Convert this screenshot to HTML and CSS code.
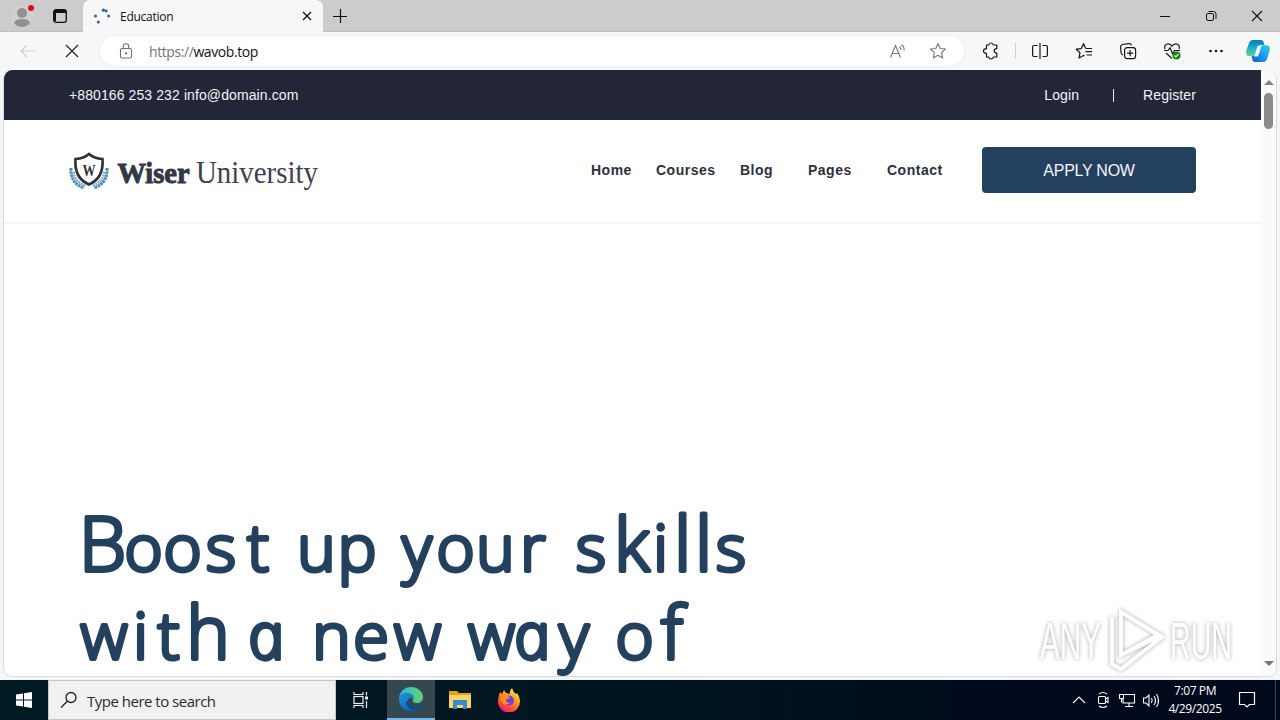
FILE: index.html
```html
<!DOCTYPE html>
<html lang="en">
<head>
<meta charset="utf-8">
<title>Education</title>
<link rel="stylesheet" href="styles.css">
</head>
<body>
<div class="desktop">
  <header class="titlebar">
    <svg class="avatar" width="28" height="32" viewBox="0 0 28 32"><circle cx="14" cy="17" r="11" fill="#d2cfce"/><circle cx="14" cy="13" r="5" fill="#929090"/><path d="M6 23q1-4 8-4t8 4q-3 4-8 4t-8-4z" fill="#929090"/><circle cx="23" cy="8" r="3" fill="#e00b1c"/></svg>
    <svg class="spaces" width="16" height="16" viewBox="0 0 16 16"><rect x="1.700" y="1.700" width="12.600" height="12.600" rx="2.300" fill="none" stroke="#111" stroke-width="1.300"/><path d="M2 2h12v3H2zM2 5h2v8H2z" fill="#111"/></svg>
    <div class="tab">
      <svg width="18" height="18" viewBox="0 0 18 18" fill="#2d6199"><circle cx="2.500" cy="9" r="1.500"/><circle cx="5.300" cy="15" r="1.500"/><circle cx="10.400" cy="3.200" r="1.600"/><circle cx="13.200" cy="4" r="1.400"/><circle cx="15.700" cy="9" r="1.500"/></svg>
      <span class="tab-name">Education</span>
      <svg class="tab-close" width="10" height="10" viewBox="0 0 10 10"><path d="M1 1l8 8M9 1l-8 8" stroke="#111" stroke-width="1.300"/></svg>
    </div>
    <svg class="plus" width="14" height="14" viewBox="0 0 14 14"><path d="M7.500 0v14M0 7.500h14" stroke="#111" stroke-width="1.200"/></svg>
    <div class="window-buttons">
      <svg width="46" height="32" viewBox="0 0 46 32"><path d="M18 16.500h10" stroke="#111"/></svg>
      <svg width="46" height="32" viewBox="0 0 46 32" fill="none" stroke="#111"><rect x="18.500" y="13.500" width="7" height="7" rx="1.500"/><path d="M20.500 11.500h5q2.500 0 2.500 2.500v5"/></svg>
      <svg width="46" height="32" viewBox="0 0 46 32"><path d="M18 11l10 10M28 11l-10 10" stroke="#111" stroke-width="1.100"/></svg>
    </div>
  </header>

  <div class="toolbar">
    <svg class="back" width="16" height="14" viewBox="0 0 16 14" fill="none" stroke="#cfcfcf" stroke-width="1.100"><path d="M15.500 7H1M7 1L1 7l6 6"/></svg>
    <svg class="stop" width="14" height="14" viewBox="0 0 14 14"><path d="M1 1l12 12M13 1L1 13" stroke="#222" stroke-width="1.200"/></svg>
    <div class="address">
      <svg width="14" height="16" viewBox="0 0 14 16" fill="none" stroke="#707070" stroke-width="1.100"><rect x="1.500" y="5.500" width="11" height="9.500" rx="1.500"/><path d="M4.300 5.500V3.500a2.700 2.700 0 0 1 5.400 0v2"/><circle cx="7" cy="10.300" r=".6" fill="#707070"/></svg>
      <span class="url"><span class="scheme">https://</span>wavob.top</span>
      <svg class="read" width="18" height="16" viewBox="0 0 18 16" fill="none" stroke="#777" stroke-width="1.100"><path d="M1.500 14.500L6.500 2.500l5 12M3.300 10.500h6.400M10.500 3.500q1.500 1.500 1.300 3.500M12.500 1.500q3 2.500 2.500 6"/></svg>
      <svg class="star" width="18" height="18" viewBox="0 0 18 18" fill="none" stroke="#777" stroke-width="1.100" stroke-linejoin="round"><path d="M9 1.500l2.200 5 5.300.500-4 3.600 1.200 5.400L9 13.200 4.300 16l1.200-5.400L1.500 7l5.300-.5z"/></svg>
    </div>
    <div class="tools">
      <svg width="44" height="20" viewBox="-14 -2 44 20" fill="none" stroke="#161616" stroke-width="1.200" stroke-linejoin="round"><path d="M3.500 2h2.200q.3-2 2.300-2t2.300 2h3.500v3.600q-2.600 0-2.600 2.200t2.600 2.200V14h-3.500q-.3 2-2.300 2t-2.300-2H3.500v-3.700Q.5 10.300.5 8t3-2.300z"/></svg>
      <span class="divider"></span>
      <svg width="44" height="20" viewBox="-14 -2 44 20" fill="none" stroke="#161616" stroke-width="1.200"><path d="M5.500 2.500H2q-1.400 0-1.400 1.400v8.200q0 1.400 1.400 1.400h3.500M10.500 2.500H14q1.400 0 1.400 1.400v8.200q0 1.400-1.400 1.400h-3.500M8 0v16"/></svg>
      <svg width="44" height="20" viewBox="-14 -2 44 20" fill="none" stroke="#161616" stroke-width="1.200" stroke-linejoin="round"><path d="M9.500 5L7.500.7 5.300 5.600.3 6.200l3.700 3.500L3 15l4.500-2.600 1 .6M9.500 5.500H16M9.500 8.700H16M10.500 12H16"/></svg>
      <svg width="44" height="20" viewBox="-14 -2 44 20" fill="none" stroke="#161616" stroke-width="1.200"><rect x="4.600" y="4.600" width="11" height="11" rx="2.500"/><path d="M10.100 7v6.200M7 10.100h6.200M3 12Q1.300 11.500 1 9.500L.6 4Q.5 2 2.500 1.500L9 .6q2-.2 2.500 1.800"/></svg>
      <svg width="44" height="20" viewBox="-14 -2 44 20" fill="none" stroke="#161616" stroke-width="1.200"><path d="M1 6Q0 2.500 2.500 1.300 6 0 8 3.200 10 0 13.500 1.300 16 2.500 15 6M0 7.500h4l2-2.800 2.500 6 2-3.200H16M2 10l6 5.500"/><circle cx="12.500" cy="12.500" r="4" fill="#16831b" stroke="none"/><path d="M10.500 12.500l1.400 1.400 2.600-2.700" stroke="#fff"/></svg>
      <svg width="44" height="20" viewBox="-14 -2 44 20" fill="#161616"><circle cx="2.500" cy="8" r="1.300"/><circle cx="8" cy="8" r="1.300"/><circle cx="13.500" cy="8" r="1.300"/></svg>
      <svg class="copilot" width="26" height="24" viewBox="0 0 26 24"><defs><linearGradient id="ca" x1="0" y1="0" x2="0" y2="1"><stop offset="0" stop-color="#0a78c2"/><stop offset=".5" stop-color="#1bb1cf"/><stop offset="1" stop-color="#61d28b"/></linearGradient><linearGradient id="cb" x1="1" y1="0" x2="0" y2="1"><stop offset="0" stop-color="#34d2ee"/><stop offset=".6" stop-color="#168df0"/><stop offset="1" stop-color="#1657cf"/></linearGradient></defs><path d="M8 1h8q2 0 2.600 2l.9 3h-4q-2 0-2.600 2l-2.900 9H4Q.5 17 1.200 12L4 4Q5 1 8 1z" fill="url(#ca)"/><path d="M18 23h-8q-2 0-2.600-2l-.8-4H10q2.200 0 3-2l2.200-6.500Q16 6.300 18 6.300h4q3.500.5 2.800 5L22 20q-1 3-4 3z" fill="url(#cb)"/><path d="M12.500 7h4l-3 9q-.5 1.500-2 1.500H9.200z" fill="#f5fbff"/></svg>
    </div>
  </div>

  <div class="viewport">
    <main class="site">
      <div class="topbar">
        <span class="reach">+880166 253 232 info@domain.com</span>
        <span class="login">Login</span><span class="bar"></span><span class="register">Register</span>
      </div>
      <div class="masthead">
        <svg class="brand" width="260" height="44" viewBox="0 0 260 44">
          <g fill="none" stroke="#4d8ab5" stroke-width="3" stroke-dasharray="2.600 .6"><path d="M2 18Q1 33 15 38"/><path d="M38 18Q39 33 25 38"/></g>
          <g fill="none" stroke="#78abcc" stroke-width="2.400" stroke-dasharray="2 .8"><path d="M4.500 22Q6 32 17 36"/><path d="M35.500 22Q34 32 23 36"/></g>
          <path d="M20 4q5 4.500 13.500 5Q35 28 20 34.500 5 28 6.500 9 15 8.500 20 4z" fill="#fff" stroke="#303036" stroke-width="2.600"/>
          <text class="crest" x="13.500" y="26" textLength="13" lengthAdjust="spacingAndGlyphs">W</text>
          <text class="wiser" x="48.500" y="33" textLength="72" lengthAdjust="spacingAndGlyphs">Wiser</text>
          <text class="university" x="127" y="33" textLength="122" lengthAdjust="spacingAndGlyphs">University</text>
        </svg>
        <nav class="menu"><a class="home">Home</a><a class="courses">Courses</a><a class="blog">Blog</a><a class="pages">Pages</a><a class="contact">Contact</a></nav>
        <a class="apply">APPLY NOW</a>
      </div>
      <section class="hero">
        <svg class="headline" width="720" height="246" viewBox="76 460 720 246">
          <text y="571" x="102.500 143.500 182.500 221 258"><tspan class="cap">B</tspan>oost</text>
          <text y="571" x="316.500 357">up</text>
          <text y="571" x="417 455.500 495.500 533">your</text>
          <text y="571" x="591 632 660.500 682.500 703.500 731">s<tspan class="kay">k</tspan>i<tspan class="tall">ll</tspan>s</text>
          <text y="659" x="104 140.500 168.500 208">wit<tspan class="kay">h</tspan></text>
          <text class="round-a" transform="translate(270 659) skewX(12)">a</text>
          <text y="659" x="331.500 371 417.500">new</text>
          <text y="659" x="491.500">w</text><text class="round-a" transform="translate(536 659) skewX(12)">a</text><text y="659" x="574">y</text>
          <text y="659" x="634.500 672"><tspan>o</tspan><tspan class="kay">f</tspan></text>
        </svg>
      </section>
    </main>
    <div class="scrollbar"><i class="up"></i><i class="thumb"></i><i class="down"></i></div>
    <svg class="watermark" width="210" height="72" viewBox="1030 604 210 72">
      <g class="mark">
        <text x="1040" y="659" textLength="61" lengthAdjust="spacingAndGlyphs">ANY</text>
        <text x="1170" y="659" textLength="62" lengthAdjust="spacingAndGlyphs">RUN</text>
        <g fill="none" stroke="#fff" stroke-width="4"><path d="M1121 612v43l37-20zM1121 612l41 25-41 32-9-5v-47M1121 655l41-20"/></g>
      </g>
    </svg>
  </div>

  <footer class="taskbar">
    <div class="start"><svg width="16" height="16" viewBox="0 0 16 16" fill="#fff"><path d="M0 2.500l7-1v6H0zM8 1.300L16 0v7.500H8zM0 8.500h7v6l-7-1zM8 8.500h8V16l-8-1.200z"/></svg></div>
    <div class="search"><svg width="18" height="18" viewBox="0 0 18 18" fill="none" stroke="#222" stroke-width="1.300"><circle cx="11" cy="6.500" r="5"/><path d="M7.300 10.200L1 16.500"/></svg><span>Type here to search</span></div>
    <div class="app view"><svg width="18" height="18" viewBox="0 0 18 18" fill="none" stroke="#eee" stroke-width="1.200"><path d="M2 1v2.500h9V1M2 17v-2.500h9V17M14.500 1v3.500M14.500 10v7"/><rect x="2" y="5.500" width="9" height="7"/><path d="M13 7h3" stroke-width="3"/></svg></div>
    <div class="app active"><svg width="24" height="24" viewBox="0 0 24 24"><defs><linearGradient id="ea"><stop offset="0" stop-color="#2bb8e8"/><stop offset="1" stop-color="#62d36a"/></linearGradient><linearGradient id="eb" x1="0" y1="0" x2="1" y2="1"><stop offset="0" stop-color="#1d98dd"/><stop offset="1" stop-color="#0757ac"/></linearGradient></defs><path d="M0 11C1 4 6 0 12 0c7 0 12 5 12 10 0 4-3 6-6 6-3 0-5-1-4-3 2-4-2-7-6-7-4 0-7 2-8 5z" fill="url(#ea)"/><path d="M0 12c0-5 5-7 8-6 4 0 7 3 6 6-4-3-7 2-4 5 3 4 8 3 12 1-2 4-6 6-10 6C5 24 0 19 0 12z" fill="url(#eb)"/><path d="M7 14c0 5 3 9 8 9 3-1 5-2 7-5-5 3-12 2-13-4z" fill="#114a8b"/></svg></div>
    <div class="app"><svg width="22" height="20" viewBox="0 0 22 20"><path d="M0 1h8l2 2h12v4H0z" fill="#e6a21d"/><path d="M0 5h22v13H0z" fill="#fbd566"/><path d="M4 19v-8q0-1 1-1h12q1 0 1 1v8h-4v-4H8v4z" fill="#348bd0"/></svg></div>
    <div class="app"><svg width="24" height="24" viewBox="0 0 24 24"><defs><linearGradient id="fx" x1=".8" y1="0" x2=".2" y2="1"><stop offset="0" stop-color="#fff44c"/><stop offset=".4" stop-color="#ff9a22"/><stop offset=".75" stop-color="#ff433b"/><stop offset="1" stop-color="#e31587"/></linearGradient></defs><path d="M2 7l1-3 2 2 2-4 2 3 4 1q-1-3 2-6 1 4 4 6l1-1q3 4 3 8A11 11 0 0 1 1 14Q1 10 2 7z" fill="url(#fx)"/><circle cx="12" cy="12.500" r="5" fill="#7142dc"/><path d="M4 9q4-3 9 0-1 2-4 2.500Q9 15 13 15q-6 4-9-2z" fill="#ff8b25"/></svg></div>
    <div class="tray">
      <svg width="24" height="20" viewBox="0 0 24 20"><path d="M6 13l6-6 6 6"/></svg>
      <svg width="24" height="20" viewBox="0 0 24 20"><rect x="7.500" y="6.500" width="7" height="7" rx="1"/><path d="M14.500 9l2.500-1.500v5L14.500 11M8 4q4-3 8 0M8 16q4 3 8 0"/></svg>
      <svg width="24" height="20" viewBox="0 0 24 20"><path d="M9 4.500h10.500v8.500H8V8M14 13v3.500M10 16.500h8M4.500 4.500h4v4h-4zM6.500 8.500v4"/></svg>
      <svg width="24" height="20" viewBox="0 0 24 20"><path d="M4.500 8h2.500l3-3v11l-3-3H4.500zM12.500 8q1.500 2.300 0 5M15 6q3 4.500 0 9M17.500 4q4 6.500 0 13"/></svg>
    </div>
    <div class="clock"><span>7:07 PM</span><span>4/29/2025</span></div>
    <svg class="notice" width="18" height="18" viewBox="0 0 18 18" fill="none" stroke="#fff" stroke-width="1.200"><path d="M1.500 1.500h15v12h-5L9 16l-2.500-2.500h-5z"/></svg>
    <span class="peek"></span>
  </footer>
</div>
</body>
</html>
```
FILE: styles.css
```css
* { box-sizing: border-box; }
body { margin: 0; background: #f4f5f6; }
svg { display: block; flex: none; }
.desktop { width: 1280px; height: 720px; overflow: hidden; display: flex; flex-direction: column; font-family: "Open Sans", "Noto Sans", sans-serif; background: #f4f5f6; }
.titlebar { height: 32px; flex: none; display: flex; align-items: center; background: #ccc; border-bottom: 1px solid #bfbfbf; }
.avatar { margin-left: 8px; }
.spaces { margin-left: 16px; }
.tab { width: 240px; height: 32px; margin-left: 15px; margin-bottom: -1px; padding: 0 11px 0 10px; display: flex; align-items: center; background: #f7f7f7; border-radius: 7px 7px 0 0; }
.tab-name { margin-left: 9px; font-size: 12px; letter-spacing: -.25px; color: #111; }
.tab-close { margin-left: auto; }
.plus { margin-left: 10px; }
.window-buttons { margin-left: auto; display: flex; }
.toolbar { height: 38px; flex: none; display: flex; align-items: center; background: #f7f7f7; }
.back { margin-left: 20px; }
.stop { margin-left: 29px; }
.address { width: 864px; height: 30px; margin-left: 21px; padding: 0 17px 0 19px; display: flex; align-items: center; background: #fff; border-radius: 15px; box-shadow: 0 0 2px #e4e4e4; }
.url { margin-left: 16px; font-size: 14px; letter-spacing: -.42px; color: #111; }
.scheme { color: #757575; }
.read { margin-left: auto; }
.star { margin-left: 22px; }
.tools { margin-left: 5px; display: flex; align-items: center; }
.divider { width: 1px; height: 16px; margin: 0 2px; background: #d0d0d0; }
.copilot { margin-left: 7px; }
.viewport { position: relative; width: 1274px; height: 607px; margin: 0 0 3px 3px; flex: none; display: flex; overflow: hidden; background: #fff; border: 1px solid #d9dadb; border-top: 0; border-radius: 9px; }
.site { width: 1257px; height: 606px; flex: none; overflow: hidden; font-family: "Liberation Sans", Arial, sans-serif; }
.topbar { height: 50px; padding: 0 65px; display: flex; align-items: center; background: #232636; color: #f4f4f6; font-size: 14px; letter-spacing: .1px; }
.login { margin-left: auto; }
.bar { width: 1px; height: 13px; margin: 0 29px 0 34px; background: #eee; }
.masthead { height: 104px; padding: 27px 65px 0; display: flex; align-items: flex-start; border-bottom: 2px solid #f7f7f7; }
.brand { margin-top: 3px; }
.crest { font: bold 16px "Liberation Serif", serif; fill: #303036; }
.wiser { font: bold 30px "Liberation Serif", serif; fill: #343746; stroke: #343746; stroke-width: 1px; }
.university { font: 31px "Liberation Serif", serif; fill: #3e4150; }
.menu { margin-left: 262px; height: 46px; display: flex; align-items: center; font-size: 14px; font-weight: bold; color: #2c303e; letter-spacing: .5px; }
.menu a { white-space: nowrap; }
.home { width: 65px; }
.courses { width: 84px; }
.blog { width: 68px; }
.pages { width: 79px; }
.contact { width: 60px; }
.apply { width: 214px; height: 46px; margin-left: auto; padding-top: 1px; border-radius: 4px; display: flex; align-items: center; justify-content: center; background: #24405f; color: #f4f6f8; font-size: 16px; letter-spacing: -.25px; }
.hero { padding: 236px 0 0 72px; }
.headline { font: 300 65px "Open Sans", "Noto Sans", sans-serif; fill: #24405f; stroke: #24405f; stroke-width: 4px; stroke-linejoin: round; text-anchor: middle; }
.tall { font-size: 76px; }
.cap { font-size: 75px; }
.kay { font-size: 73px; }
.round-a { font-style: italic; }
.scrollbar { width: 15px; background: #fafafa; display: flex; flex-direction: column; align-items: center; }
.up { margin-top: 10px; border: 5px solid transparent; border-top: 0; border-bottom: 5px solid #858585; }
.thumb { width: 9px; height: 36px; margin-top: 8px; border-radius: 5px; background: #8b8b8b; }
.down { margin: auto 0 10px; border: 5px solid transparent; border-bottom: 0; border-top: 5px solid #757575; }
.watermark { position: absolute; left: 1026px; top: 534px; }
.mark { filter: drop-shadow(0 0 2px #a8a8a8); }
.mark text { font: 52px "Liberation Sans", Arial, sans-serif; fill: #fff; }
.taskbar { height: 40px; flex: none; display: flex; align-items: center; background: linear-gradient(90deg, #001923 0%, #00141f 55%, #000a1c 80%, #000a1c 100%); color: #fff; }
.start { width: 48px; display: flex; justify-content: center; }
.search { width: 288px; height: 40px; padding-left: 11px; display: flex; align-items: center; gap: 9px; background: #f1f1f1; border: 1px solid #c5c5c5; color: #2c2c2c; font-size: 15px; letter-spacing: -.5px; }
.search span { padding-top: 1px; }
.app { width: 49px; height: 40px; display: flex; align-items: center; justify-content: center; }
.view { width: 51px; padding-right: 2px; }
.active { width: 48px; background: #354850; border-bottom: 2px solid #76b9ed; }
.tray { margin-left: auto; display: flex; fill: none; stroke: #fff; stroke-width: 1.1px; }
.clock { width: 64px; display: flex; flex-direction: column; align-items: center; font-size: 12px; line-height: 18px; letter-spacing: -.4px; }
.notice { margin: 0 19px 0 11px; }
.peek { width: 1px; height: 40px; margin-right: 4px; background: #3b4352; }
```
